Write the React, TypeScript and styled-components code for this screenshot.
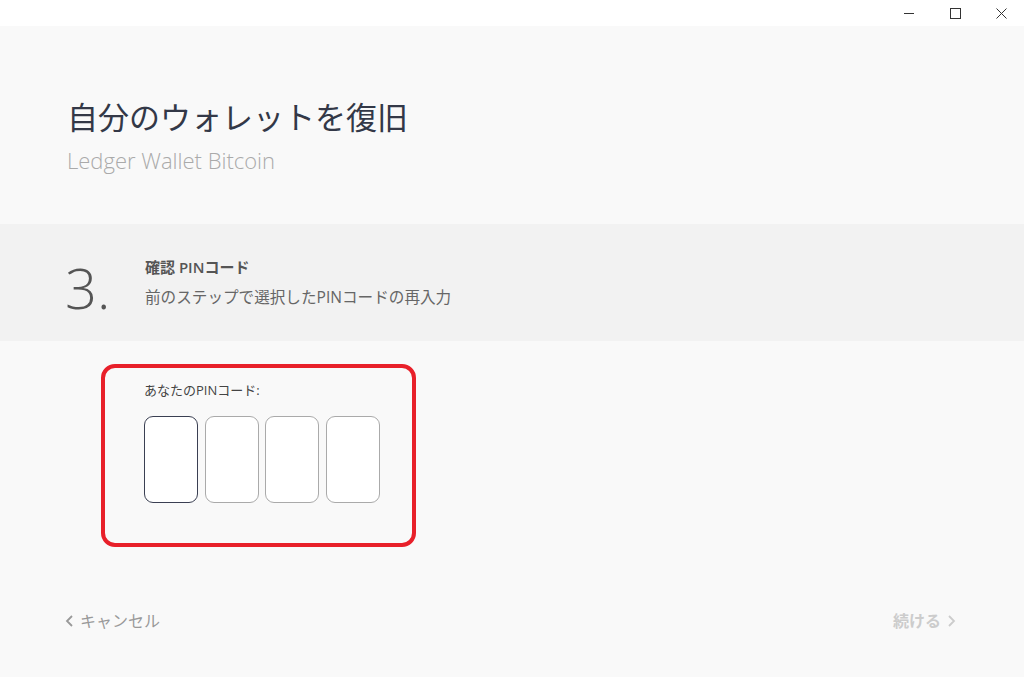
import React from 'react'
import styled, { createGlobalStyle } from 'styled-components'

const Global = createGlobalStyle`
html, body {
  margin: 0;
  padding: 0;
  background: #f9f9f9;
}
#root {
  height: 100vh;
}
* {
  box-sizing: border-box;
}
`;

const Window = styled.div`
display: flex;
flex-direction: column;
height: 100%;
font-family: "Open Sans", "Noto Sans CJK JP", sans-serif;
color: #333847;
background: #f9f9f9;
`;

const TitleBar = styled.div`
height: 26px;
background: #fff;
display: flex;
justify-content: flex-end;
align-items: center;
`;

const WinButton = styled.div`
width: 46px;
height: 26px;
display: flex;
align-items: center;
justify-content: center;
color: #333;
`;

const Header = styled.div`
height: 198px;
padding: 71px 0 0 67px;
`;

const Title = styled.h1`
margin: 0;
font-size: 31px;
line-height: 40px;
font-weight: 400;
color: #333847;
`;

const Subtitle = styled.div`
margin-top: 8px;
font-size: 22px;
line-height: 30px;
font-weight: 300;
color: #aaaaaa;
`;

const StepBand = styled.div`
height: 117px;
background: #f2f2f2;
display: flex;
align-items: center;
padding-left: 65px;
`;

const StepNumber = styled.div`
width: 80px;
font-size: 56px;
line-height: 60px;
font-weight: 300;
color: #555;
margin-top: 8px;
`;

const StepText = styled.div`
display: flex;
flex-direction: column;
gap: 8px;
margin-top: -2px;
`;

const StepTitle = styled.div`
font-size: 15px;
line-height: 22px;
font-weight: 600;
color: #555;
`;

const StepDesc = styled.div`
font-size: 15.6px;
line-height: 22px;
color: #666;
`;

const PinArea = styled.div`
padding: 23px 0 0 101px;
`;

const Highlight = styled.div`
width: 315px;
height: 183px;
border: 4px solid #e8202a;
border-radius: 14px;
padding: 13px 0 0 39px;
`;

const PinLabel = styled.div`
font-size: 13px;
line-height: 18px;
color: #444;
`;

const PinRow = styled.div`
display: flex;
gap: 6.5px;
margin-top: 17px;
`;

const PinBox = styled.div<{ $active?: boolean }>`
width: 54px;
height: 87px;
background: #fff;
border: 1.5px solid ${p => (p.$active ? '#3a3f52' : '#aaaaaa')};
border-radius: 9px;
`;

const Footer = styled.div`
margin-top: auto;
height: 100px;
display: flex;
justify-content: space-between;
align-items: flex-start;
padding: 32px 68px 0 65px;
`;

const NavButton = styled.div<{ $disabled?: boolean }>`
display: flex;
align-items: center;
gap: 6px;
font-size: 16px;
line-height: 24px;
font-weight: ${p => (p.$disabled ? 700 : 400)};
color: ${p => (p.$disabled ? '#cccccc' : '#999999')};
`;

const Chevron = ({ dir, color }: { dir: 'left' | 'right'; color: string }) => (
  <svg width="9" height="14" viewBox="0 0 9 14">
    <path
      d={dir === 'left' ? 'M7 2 L2 7 L7 12' : 'M2 2 L7 7 L2 12'}
      fill="none"
      stroke={color}
      strokeWidth="1.8"
    />
  </svg>
);

const App = () => {
  return (
    <>
      <Global />
      <Window>
        <TitleBar>
          <WinButton>
            <svg width="11" height="11" viewBox="0 0 11 11">
              <path d="M0 5.5 H10" stroke="#333" strokeWidth="1" />
            </svg>
          </WinButton>
          <WinButton>
            <svg width="11" height="11" viewBox="0 0 11 11">
              <rect x="0.5" y="0.5" width="10" height="10" fill="none" stroke="#333" strokeWidth="1" />
            </svg>
          </WinButton>
          <WinButton>
            <svg width="11" height="11" viewBox="0 0 11 11">
              <path d="M0.5 0.5 L10.5 10.5 M10.5 0.5 L0.5 10.5" stroke="#333" strokeWidth="1" />
            </svg>
          </WinButton>
        </TitleBar>
        <Header>
          <Title>自分のウォレットを復旧</Title>
          <Subtitle>Ledger Wallet Bitcoin</Subtitle>
        </Header>
        <StepBand>
          <StepNumber>3.</StepNumber>
          <StepText>
            <StepTitle>確認 PINコード</StepTitle>
            <StepDesc>前のステップで選択したPINコードの再入力</StepDesc>
          </StepText>
        </StepBand>
        <PinArea>
          <Highlight>
            <PinLabel>あなたのPINコード:</PinLabel>
            <PinRow>
              <PinBox $active />
              <PinBox />
              <PinBox />
              <PinBox />
            </PinRow>
          </Highlight>
        </PinArea>
        <Footer>
          <NavButton>
            <Chevron dir="left" color="#999999" />
            キャンセル
          </NavButton>
          <NavButton $disabled>
            続ける
            <Chevron dir="right" color="#cccccc" />
          </NavButton>
        </Footer>
      </Window>
    </>
  )
}

export default App
